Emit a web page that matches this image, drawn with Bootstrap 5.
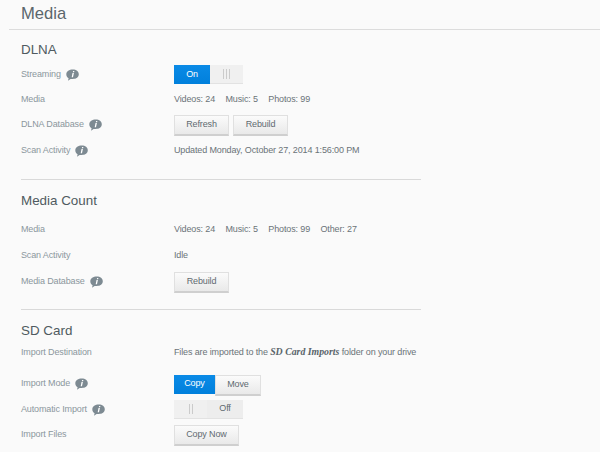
<!DOCTYPE html>
<html lang="en">
<head>
<meta charset="utf-8">
<title>Media</title>
<link href="https://cdn.jsdelivr.net/npm/bootstrap@5.3.0/dist/css/bootstrap.min.css" rel="stylesheet">
<style>
html,body{height:452px;overflow:hidden}
body{background:#fafafa;font-family:"Liberation Sans",Arial,sans-serif;font-size:9px;letter-spacing:-.13px;color:#6a7378}
.page-head{margin-left:9px;height:30px;border-bottom:1px solid #dcdcdc;padding-left:12px}
.page-head h1{font-size:16.6px;line-height:27px;font-weight:400;letter-spacing:0;color:#5b666c;margin:0}
.sect{width:400px;margin-left:21px}
.sect+.sect{border-top:1px solid #d9d9d9}
.sect h2{font-size:13.4px;font-weight:400;letter-spacing:0;color:#4f5a60;margin:0;line-height:20px}
.s1{height:149px;padding-top:10px}
.s2{height:130px;padding-top:11px}
.s3{padding-top:11px}
.set-row{display:flex;align-items:center}
.lbl{width:153px;flex:none;color:#8b979d;display:flex;align-items:center;gap:5px}
.val{color:#6a7378}
.val span{margin-right:8px}
.tip{width:13px;height:12px;display:block;flex:none}
.wd-btn{font-size:9px;letter-spacing:-.13px;line-height:1;padding:0;height:21px;border-radius:0;color:#5f6a70;background:linear-gradient(#fbfbfb,#e9e9e9);border:1px solid #e0e0e0;border-bottom:2px solid #cfcfcf;box-shadow:none;display:inline-flex;align-items:center;justify-content:center}
.w55{width:55px}
.w65{width:65px}
.tog{display:flex;height:19px}
.tog-on{background:linear-gradient(#0a8ae6,#0180dc);color:#fff;display:flex;align-items:center;justify-content:center}
.tog-off{background:#ededed;color:#5f6a70;display:flex;align-items:center;justify-content:center;border-bottom:1px solid #e2e2e2}
.tog-grip{background:#f0f0f0;display:flex;align-items:center;justify-content:center;gap:2px;border-bottom:1px solid #e2e2e2}
.tog-grip i{display:block;width:1px;height:10px;background:#cbcbcb}
.w36{width:36px}.w33{width:33px}
.w41{width:41px}.w46{width:46px}
.mode{height:19px;display:flex}
.r0{height:23px}.r1{height:25px}.r2{height:26px}
.push2{margin-top:2px}
.push6{margin-top:6px}
.push7{margin-top:7px}
em.fold{font-family:"Liberation Serif",serif;font-style:italic;font-weight:700;font-size:9.8px;letter-spacing:0;color:#59646a}
</style>
</head>
<body>
<svg width="0" height="0" class="d-block" aria-hidden="true"><defs>
<symbol id="tip" viewBox="0 0 13 12"><path d="M6.800.5C10.200.5 12.800 2.300 12.800 5.300S10.200 10 6.800 10H4.600L2 11.700 2.600 9.300C1 8.500.3 7 .3 5.300.3 2.300 3.300.5 6.800.5Z" fill="#7d8a92"/><path d="M7.100 2h1.300l-.3 1.200H6.800ZM6.500 4.100h1.400L7 8.300H5.700Z" fill="#fff"/></symbol>
</defs></svg>
<div class="page-head"><h1>Media</h1></div>

<section class="sect s1">
  <h2>DLNA</h2>
  <div class="set-row r1 push2"><div class="lbl">Streaming <svg class="tip"><use href="#tip"/></svg></div>
    <div class="tog"><div class="tog-on w36">On</div><div class="tog-grip w33"><i></i><i></i><i></i></div></div></div>
  <div class="set-row r1"><div class="lbl">Media</div><div class="val"><span>Videos: 24</span> <span>Music: 5</span> Photos: 99</div></div>
  <div class="set-row r2"><div class="lbl">DLNA Database <svg class="tip"><use href="#tip"/></svg></div>
    <div class="d-flex gap-1"><button class="btn wd-btn w55">Refresh</button><button class="btn wd-btn w55">Rebuild</button></div></div>
  <div class="set-row r1"><div class="lbl">Scan Activity <svg class="tip"><use href="#tip"/></svg></div><div class="val">Updated Monday, October 27, 2014 1:56:00 PM</div></div>
</section>

<section class="sect s2">
  <h2>Media Count</h2>
  <div class="set-row r2 push6"><div class="lbl">Media</div><div class="val"><span>Videos: 24</span> <span>Music: 5</span> <span>Photos: 99</span> Other: 27</div></div>
  <div class="set-row r2"><div class="lbl">Scan Activity</div><div class="val">Idle</div></div>
  <div class="set-row r2"><div class="lbl">Media Database <svg class="tip"><use href="#tip"/></svg></div><button class="btn wd-btn w55">Rebuild</button></div>
</section>

<section class="sect s3">
  <h2>SD Card</h2>
  <div class="set-row r0"><div class="lbl">Import Destination</div><div class="val">Files are imported to the <em class="fold">SD Card Imports</em> folder on your drive</div></div>
  <div class="set-row r2 push7"><div class="lbl">Import Mode <svg class="tip"><use href="#tip"/></svg></div>
    <div class="mode"><div class="tog-on w41">Copy</div><button class="btn wd-btn w46">Move</button></div></div>
  <div class="set-row r1"><div class="lbl">Automatic Import <svg class="tip"><use href="#tip"/></svg></div>
    <div class="tog"><div class="tog-grip w33"><i></i><i></i></div><div class="tog-off w36">Off</div></div></div>
  <div class="set-row r2"><div class="lbl">Import Files</div><button class="btn wd-btn w65">Copy Now</button></div>
</section>
<script src="https://cdn.jsdelivr.net/npm/bootstrap@5.3.0/dist/js/bootstrap.bundle.min.js"></script>
</body>
</html>
